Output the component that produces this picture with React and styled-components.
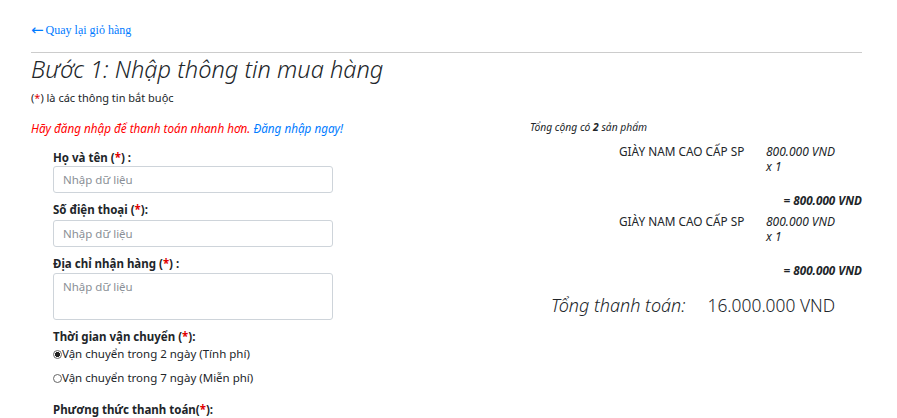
import React from 'react';
import styled, { createGlobalStyle } from 'styled-components';

const GlobalStyle = createGlobalStyle`
	body {
		margin: 0;
		background: #fff;
		color: #212529;
		font-family: "Noto Sans", "Open Sans", sans-serif;
	}
`;

const Page = styled.div`
	padding: 18px 35px 0 31px;
`;

const BackLink = styled.a`
	display: inline-flex;
	align-items: center;
	font-family: "Liberation Serif", serif;
	font-size: 12px;
	color: #007bff;
	text-decoration: none;
	line-height: 18px;
`;

const Arrow = styled.span`
	font-family: "DejaVu Sans", sans-serif;
	font-size: 15px;
	line-height: 18px;
	margin-right: 2px;
`;

const Rule = styled.hr`
	margin: 12px 0 0 0;
	border: 0;
	border-top: 1px solid #ccc;
`;

const Title = styled.h1`
	margin: 1px 0 0 0;
	font-size: 23.6px;
	font-weight: 300;
	font-style: italic;
	line-height: 30px;
`;

const Note = styled.p`
	margin: 6px 0 0 0;
	font-size: 11px;
	line-height: 16px;
`;

const Star = styled.span`
	color: #e00000;
`;

const Columns = styled.div`
	display: grid;
	grid-template-columns: 499px 1fr;
	margin-top: 14px;
`;

const LoginHint = styled.p`
	margin: 0;
	font-size: 11.7px;
	font-style: italic;
	color: #ff0000;
	line-height: 16px;
`;

const LoginLink = styled.a`
	color: #007bff;
	text-decoration: none;
`;

const Form = styled.div`
	padding: 14px 0 0 22px;
	display: flex;
	flex-direction: column;
`;

const Label = styled.label`
	display: block;
	font-size: 11.5px;
	font-weight: 700;
	line-height: 16px;
	margin-top: ${p => p.$gap || 0}px;
`;

const Input = styled.input`
	box-sizing: border-box;
	display: block;
	width: 280px;
	height: 27px;
	margin-top: ${p => p.$gap || 0}px;
	padding: 0 9px;
	border: 1px solid #ced4da;
	border-radius: 3px;
	font-family: inherit;
	font-size: 11.5px;
	&::placeholder {
		color: #8a8f96;
	}
`;

const Area = styled.textarea`
	box-sizing: border-box;
	display: block;
	width: 280px;
	height: 47px;
	margin-top: 1px;
	padding: 5px 9px;
	border: 1px solid #ced4da;
	border-radius: 3px;
	font-family: inherit;
	font-size: 11.5px;
	resize: none;
	&::placeholder {
		color: #8a8f96;
	}
`;

const Option = styled.label`
	display: flex;
	align-items: center;
	font-size: 11.5px;
	line-height: 16px;
	margin-top: ${p => p.$gap}px;
`;

const Radio = styled.input`
	appearance: none;
	box-sizing: border-box;
	margin: 0;
	width: 9px;
	height: 9px;
	border: 1px solid #666;
	border-radius: 50%;
	background: #fff;
	&:checked {
		background: radial-gradient(circle, #222 0 2.3px, #fff 2.6px);
	}
`;

const Summary = styled.div``;

const Count = styled.p`
	margin: 0;
	font-size: 10.3px;
	font-style: italic;
	line-height: 14px;
`;

const Item = styled.div`
	display: grid;
	grid-template-columns: 147px auto;
	margin-top: ${p => p.$first ? 10 : 6}px;
	padding-left: 89px;
`;

const ItemName = styled.div`
	font-size: 11.8px;
	line-height: 15px;
	text-transform: uppercase;
	white-space: nowrap;
`;

const PriceLine = styled.div`
	font-size: 12px;
	font-style: italic;
	line-height: 15px;
	white-space: nowrap;
`;

const ItemTotal = styled.div`
	text-align: right;
	font-size: 11.7px;
	font-weight: 700;
	font-style: italic;
	line-height: 15px;
	margin-top: 19px;
`;

const Grand = styled.div`
	display: flex;
	align-items: baseline;
	gap: 22px;
	padding-left: 21px;
	margin-top: 15px;
	line-height: 24px;
`;

const GrandLabel = styled.span`
	font-size: 18px;
	font-style: italic;
	font-weight: 300;
`;

const GrandValue = styled.span`
	font-size: 17.4px;
	font-weight: 300;
`;

const items = [
	{ name: 'Giày nam cao cấp SP', price: '800.000 VND', qty: 1, total: '800.000 VND' },
	{ name: 'Giày nam cao cấp SP', price: '800.000 VND', qty: 1, total: '800.000 VND' },
];

const App = () => (
	<Page>
		<GlobalStyle />
		<BackLink href="#"><Arrow>←</Arrow>Quay lại giỏ hàng</BackLink>
		<Rule />
		<Title>Bước 1: Nhập thông tin mua hàng</Title>
		<Note>(<Star>*</Star>) là các thông tin bắt buộc</Note>
		<Columns>
			<div>
				<LoginHint>
					Hãy đăng nhập để thanh toán nhanh hơn. <LoginLink href="#">Đăng nhập ngay!</LoginLink>
				</LoginHint>
				<Form>
					<Label>Họ và tên (<Star>*</Star>) :</Label>
					<Input placeholder="Nhập dữ liệu" />
					<Label $gap={9}>Số điện thoại (<Star>*</Star>):</Label>
					<Input $gap={2} placeholder="Nhập dữ liệu" />
					<Label $gap={9}>Địa chỉ nhận hàng (<Star>*</Star>) :</Label>
					<Area placeholder="Nhập dữ liệu" />
					<Label $gap={9}>Thời gian vận chuyển (<Star>*</Star>):</Label>
					<Option $gap={1}>
						<Radio type="radio" name="ship" defaultChecked />Vận chuyển trong 2 ngày (Tính phí)
					</Option>
					<Option $gap={8}>
						<Radio type="radio" name="ship" />Vận chuyển trong 7 ngày (Miễn phí)
					</Option>
					<Label $gap={16}>Phương thức thanh toán(<Star>*</Star>):</Label>
				</Form>
			</div>
			<Summary>
				<Count>Tổng cộng có <b>2</b> sản phẩm</Count>
				{items.map((item, i) => (
					<div key={`item-${i}`}>
						<Item $first={i === 0}>
							<ItemName>{item.name}</ItemName>
							<div>
								<PriceLine>{item.price}</PriceLine>
								<PriceLine>x {item.qty}</PriceLine>
							</div>
						</Item>
						<ItemTotal>= {item.total}</ItemTotal>
					</div>
				))}
				<Grand>
					<GrandLabel>Tổng thanh toán:</GrandLabel>
					<GrandValue>16.000.000 VND</GrandValue>
				</Grand>
			</Summary>
		</Columns>
	</Page>
);

export default App;
